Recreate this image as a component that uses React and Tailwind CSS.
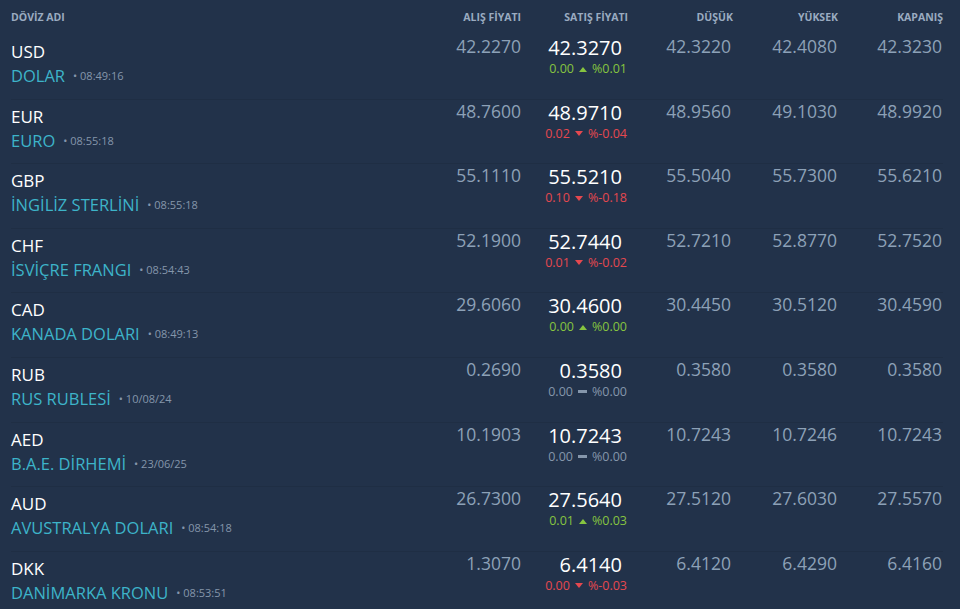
import React from 'react';

const rows = [
  { code: 'USD', name: 'DOLAR', time: '08:49:16', buy: '42.2270', sell: '42.3270', diff: '0.00', dir: 'up', pct: '%0.01', low: '42.3220', high: '42.4080', close: '42.3230' },
  { code: 'EUR', name: 'EURO', time: '08:55:18', buy: '48.7600', sell: '48.9710', diff: '0.02', dir: 'down', pct: '%-0.04', low: '48.9560', high: '49.1030', close: '48.9920' },
  { code: 'GBP', name: 'İNGİLİZ STERLİNİ', time: '08:55:18', buy: '55.1110', sell: '55.5210', diff: '0.10', dir: 'down', pct: '%-0.18', low: '55.5040', high: '55.7300', close: '55.6210' },
  { code: 'CHF', name: 'İSVİÇRE FRANGI', time: '08:54:43', buy: '52.1900', sell: '52.7440', diff: '0.01', dir: 'down', pct: '%-0.02', low: '52.7210', high: '52.8770', close: '52.7520' },
  { code: 'CAD', name: 'KANADA DOLARI', time: '08:49:13', buy: '29.6060', sell: '30.4600', diff: '0.00', dir: 'up', pct: '%0.00', low: '30.4450', high: '30.5120', close: '30.4590' },
  { code: 'RUB', name: 'RUS RUBLESİ', time: '10/08/24', buy: '0.2690', sell: '0.3580', diff: '0.00', dir: 'flat', pct: '%0.00', low: '0.3580', high: '0.3580', close: '0.3580' },
  { code: 'AED', name: 'B.A.E. DİRHEMİ', time: '23/06/25', buy: '10.1903', sell: '10.7243', diff: '0.00', dir: 'flat', pct: '%0.00', low: '10.7243', high: '10.7246', close: '10.7243' },
  { code: 'AUD', name: 'AVUSTRALYA DOLARI', time: '08:54:18', buy: '26.7300', sell: '27.5640', diff: '0.01', dir: 'up', pct: '%0.03', low: '27.5120', high: '27.6030', close: '27.5570' },
  { code: 'DKK', name: 'DANİMARKA KRONU', time: '08:53:51', buy: '1.3070', sell: '6.4140', diff: '0.00', dir: 'down', pct: '%-0.03', low: '6.4120', high: '6.4290', close: '6.4160' },
];

const cols = 'grid grid-cols-[1fr_110px_107px_105px_105px_105px]';

function Change({ diff, dir, pct }) {
  const color = dir === 'up' ? 'text-[#86c440]' : dir === 'down' ? 'text-[#e5484f]' : 'text-[#8596ab]';
  return (
    <div className={`flex items-center justify-end gap-[5px] text-[12.5px] leading-[16px] ${color}`}>
      <span>{diff}</span>
      {dir === 'up' && <span className="inline-block w-0 h-0 border-l-[4px] border-r-[4px] border-b-[5px] border-l-transparent border-r-transparent border-b-[#86c440]" />}
      {dir === 'down' && <span className="inline-block w-0 h-0 border-l-[4px] border-r-[4px] border-t-[5px] border-l-transparent border-r-transparent border-t-[#e5484f]" />}
      {dir === 'flat' && <span className="inline-block w-[9px] h-[3px] bg-[#8596ab]" />}
      <span>{pct}</span>
    </div>
  );
}

export default function App() {
  return (
    <div className="h-[609px] overflow-hidden bg-[#22324a] pl-[11px] pr-[17px]" style={{ fontFamily: '"Open Sans", "Noto Sans", sans-serif' }}>
      <div className={`${cols} h-[35px] items-center text-[10.5px] font-bold text-[#9aabc0]`}>
        <div className="text-left">DÖVİZ ADI</div>
        <div className="text-right">ALIŞ FİYATI</div>
        <div className="text-right">SATIŞ FİYATI</div>
        <div className="text-right">DÜŞÜK</div>
        <div className="text-right">YÜKSEK</div>
        <div className="text-right">KAPANIŞ</div>
      </div>

      {rows.map((r) => (
        <div key={r.code} className={`${cols} h-[64.6px] border-b border-[#1f2e44]`}>
          <div className="pt-[6px]">
            <div className="text-[17px] leading-[22px] text-white">{r.code}</div>
            <div className="mt-[2px] flex items-center leading-[22px]">
              <span className="text-[16.5px] text-[#3db4c9]">{r.name}</span>
              <span className="ml-[8px] text-[11px] text-[#8596ab]">• {r.time}</span>
            </div>
          </div>
          <div className="pt-[1px] text-right text-[17.5px] leading-[20px] text-[#8da1b7]">{r.buy}</div>
          <div className="pt-[1px] text-right">
            <div className="pr-[6px] text-[20px] leading-[24px] text-white">{r.sell}</div>
            <div className="mt-[1px] pr-[1px]">
              <Change diff={r.diff} dir={r.dir} pct={r.pct} />
            </div>
          </div>
          <div className="pt-[1px] pr-[2px] text-right text-[17.5px] leading-[20px] text-[#8da1b7]">{r.low}</div>
          <div className="pt-[1px] pr-[1px] text-right text-[17.5px] leading-[20px] text-[#8da1b7]">{r.high}</div>
          <div className="pt-[1px] pr-[1px] text-right text-[17.5px] leading-[20px] text-[#8da1b7]">{r.close}</div>
        </div>
      ))}
    </div>
  );
}
